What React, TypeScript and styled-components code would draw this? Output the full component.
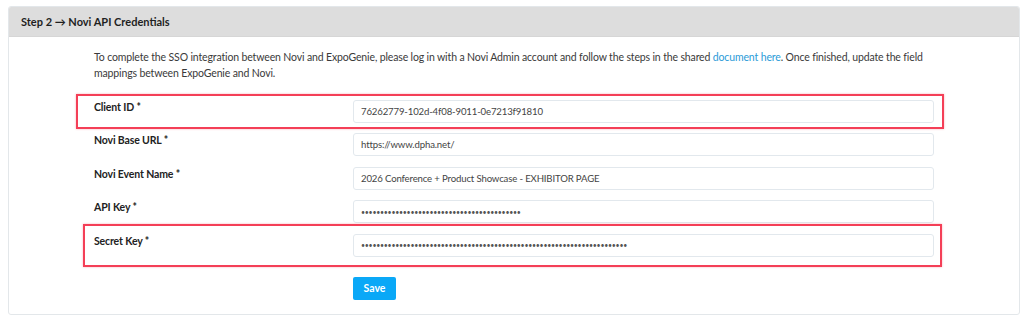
import React from "react";
import styled, { createGlobalStyle } from "styled-components";

const Global = createGlobalStyle`
  html, body { margin: 0; padding: 0; background: #ffffff; }
  body { font-family: Lato, "Open Sans", Arial, sans-serif; color: #333; }
  * { box-sizing: border-box; }
`;

const Page = styled.div`
  padding: 6px 4px 0 8px;
`;

const Card = styled.section`
  border: 1px solid #e3e7ea;
  border-radius: 3px;
  background: #fff;
  overflow: hidden;
`;

const CardHeader = styled.header`
  height: 30px;
  background: #dddddd;
  display: flex;
  align-items: center;
  padding-left: 12px;
  font-size: 11px;
  font-weight: 700;
  color: #1f1f1f;
  border-bottom: 1px solid #d6d6d6;
`;

const CardBody = styled.div`
  padding: 13px 85px 14px 85px;
`;

const Intro = styled.p`
  margin: 0 0 19px 0;
  font-size: 10.5px;
  letter-spacing: -0.14px;
  line-height: 15.5px;
  color: #3a3a3a;
`;

const Link = styled.a`
  color: #2b9bd8;
  text-decoration: none;
`;

const Form = styled.div`
  display: flex;
  flex-direction: column;
  gap: 10.4px;
`;

const Row = styled.div`
  position: relative;
  display: grid;
  grid-template-columns: 259px 1fr;
  align-items: start;
`;

const Highlight = styled.div<{ $t: number; $l: number; $r: number; $b: number }>`
  position: absolute;
  top: ${(p) => -p.$t}px;
  left: ${(p) => -p.$l}px;
  right: ${(p) => -p.$r}px;
  bottom: ${(p) => -p.$b}px;
  border: 2px solid #f43f57;
  box-shadow: 0 0 2px rgba(244, 63, 87, 0.4);
  pointer-events: none;
`;

const Label = styled.label`
  font-size: 10.5px;
  letter-spacing: -0.14px;
  font-weight: 700;
  line-height: 14px;
  color: #222;
`;

const Input = styled.input`
  height: 23px;
  width: 100%;
  border: 1px solid #e2e8ed;
  border-radius: 3px;
  padding: 0 7px;
  font-family: Lato, "Open Sans", Arial, sans-serif;
  font-size: 9.6px;
  letter-spacing: -0.15px;
  color: #444;
  background: #fff;
  outline: none;
  &[type="password"] {
    font-size: 7px;
    letter-spacing: -0.26px;
    color: #555;
  }
`;

const Actions = styled.div`
  display: grid;
  grid-template-columns: 259px 1fr;
  margin-top: 20px;
`;

const SaveButton = styled.button`
  grid-column: 2;
  justify-self: start;
  height: 23px;
  width: 43px;
  border: none;
  border-radius: 2px;
  background: #0aa8f7;
  color: #fff;
  font-family: Lato, "Open Sans", Arial, sans-serif;
  font-size: 10.5px;
  font-weight: 700;
  cursor: pointer;
`;

type Field = {
  label: string;
  value: string;
  password?: boolean;
  hl?: { t: number; l: number; r: number; b: number };
};

const fields: Field[] = [
  {
    label: "Client ID *",
    value: "76262779-102d-4f08-9011-0e7213f91810",
    hl: { t: 6, l: 18, r: 10, b: 6 },
  },
  { label: "Novi Base URL *", value: "https://www.dpha.net/" },
  { label: "Novi Event Name *", value: "2026 Conference + Product Showcase - EXHIBITOR PAGE" },
  { label: "API Key *", value: "x".repeat(42), password: true },
  {
    label: "Secret Key *",
    value: "x".repeat(70),
    password: true,
    hl: { t: 10, l: 11, r: 8, b: 10 },
  },
];

export default function App() {
  return (
    <Page>
      <Global />
      <Card>
        <CardHeader>Step 2 → Novi API Credentials</CardHeader>
        <CardBody>
          <Intro>
            To complete the SSO integration between Novi and ExpoGenie, please log in with a Novi Admin account and
            follow the steps in the shared <Link href="#">document here</Link>. Once finished, update the field
            mappings between ExpoGenie and Novi.
          </Intro>
          <Form>
            {fields.map((f) => (
              <Row key={f.label}>
                <Label>{f.label}</Label>
                <Input type={f.password ? "password" : "text"} defaultValue={f.value} readOnly />
                {f.hl && <Highlight $t={f.hl.t} $l={f.hl.l} $r={f.hl.r} $b={f.hl.b} />}
              </Row>
            ))}
          </Form>
          <Actions>
            <SaveButton>Save</SaveButton>
          </Actions>
        </CardBody>
      </Card>
    </Page>
  );
}
